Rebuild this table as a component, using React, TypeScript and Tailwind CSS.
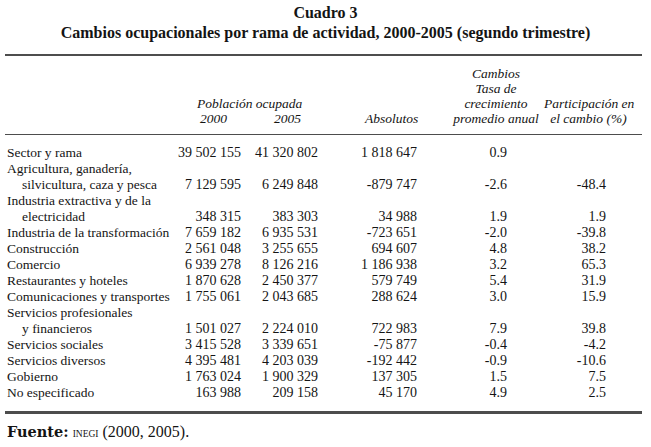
const rows: { label: string; sub?: string; v: string[] }[] = [
  { label: "Sector y rama", v: ["39 502 155", "41 320 802", "1 818 647", "0.9", ""] },
  { label: "Agricultura, ganadería,", sub: "silvicultura, caza y pesca", v: ["7 129 595", "6 249 848", "-879 747", "-2.6", "-48.4"] },
  { label: "Industria extractiva y de la", sub: "electricidad", v: ["348 315", "383 303", "34 988", "1.9", "1.9"] },
  { label: "Industria de la transformación", v: ["7 659 182", "6 935 531", "-723 651", "-2.0", "-39.8"] },
  { label: "Construcción", v: ["2 561 048", "3 255 655", "694 607", "4.8", "38.2"] },
  { label: "Comercio", v: ["6 939 278", "8 126 216", "1 186 938", "3.2", "65.3"] },
  { label: "Restaurantes y hoteles", v: ["1 870 628", "2 450 377", "579 749", "5.4", "31.9"] },
  { label: "Comunicaciones y transportes", v: ["1 755 061", "2 043 685", "288 624", "3.0", "15.9"] },
  { label: "Servicios profesionales", sub: "y financieros", v: ["1 501 027", "2 224 010", "722 983", "7.9", "39.8"] },
  { label: "Servicios sociales", v: ["3 415 528", "3 339 651", "-75 877", "-0.4", "-4.2"] },
  { label: "Servicios diversos", v: ["4 395 481", "4 203 039", "-192 442", "-0.9", "-10.6"] },
  { label: "Gobierno", v: ["1 763 024", "1 900 329", "137 305", "1.5", "7.5"] },
  { label: "No especificado", v: ["163 988", "209 158", "45 170", "4.9", "2.5"] },
];

function Values({ v }: { v: string[] }) {
  return (
    <>
      {v.map((x, i) => (
        <div key={i} className="text-right whitespace-nowrap">
          {x}
        </div>
      ))}
    </>
  );
}

export default function App() {
  return (
    <main className="w-[651px] h-[447px] bg-white text-[#141414] [font-family:'Liberation_Serif',serif] overflow-hidden">
      <header className="pt-[3px] text-center font-bold text-[16px] leading-[20px]">
        <h1>Cuadro 3</h1>
        <h2>Cambios ocupacionales por rama de actividad, 2000-2005 (segundo trimestre)</h2>
      </header>

      <section className="ml-[5px] w-[637px] mt-[11px]">
        <div className="h-[2px] bg-[#4d4d4d]" />

        {/* column heads */}
        <div className="flex items-end pt-[10px] pb-[8px] italic text-[13.5px] leading-[15px] whitespace-nowrap">
          <div className="w-[192px] shrink-0" />
          <div className="w-[105px] shrink-0">
            <div>Población ocupada</div>
            <div className="flex justify-between pl-[3px] pr-[1px]">
              <span>2000</span>
              <span>2005</span>
            </div>
          </div>
          <div className="w-[151px] shrink-0 pl-[63px]">Absolutos</div>
          <div className="w-[86px] shrink-0 text-center">
            <div>Cambios</div>
            <div>Tasa de</div>
            <div>crecimiento</div>
            <div>promedio anual</div>
          </div>
          <div className="w-[89px] shrink-0 ml-[5px] text-center">
            <div>Participación en</div>
            <div>el cambio (%)</div>
          </div>
        </div>

        <div className="h-px bg-[#4d4d4d]" />

        <div className="grid grid-cols-[166px_70px_77px_99px_90px_99px] pt-[10px] pb-[10px] text-[14px] leading-[16px]">
          {rows.map((r) =>
            r.sub ? (
              <div key={r.label} className="contents">
                <div className="pl-[2px] col-span-6 text-[13.5px]">{r.label}</div>
                <div className="pl-[17px] whitespace-nowrap text-[13.5px]">{r.sub}</div>
                <Values v={r.v} />
              </div>
            ) : (
              <div key={r.label} className="contents">
                <div className="pl-[2px] whitespace-nowrap text-[13.5px]">{r.label}</div>
                <Values v={r.v} />
              </div>
            )
          )}
        </div>

        <div className="h-[3px] bg-[#4d4d4d]" />
      </section>

      <p className="pl-[7px] mt-[9px] text-[16px] leading-[18px]">
        <span className="font-bold [font-family:'DejaVu_Serif',serif] text-[14.5px]">Fuente:</span>{" "}
        <span className="text-[9.5px]">INEGI</span> (2000, 2005).
      </p>
    </main>
  );
}
